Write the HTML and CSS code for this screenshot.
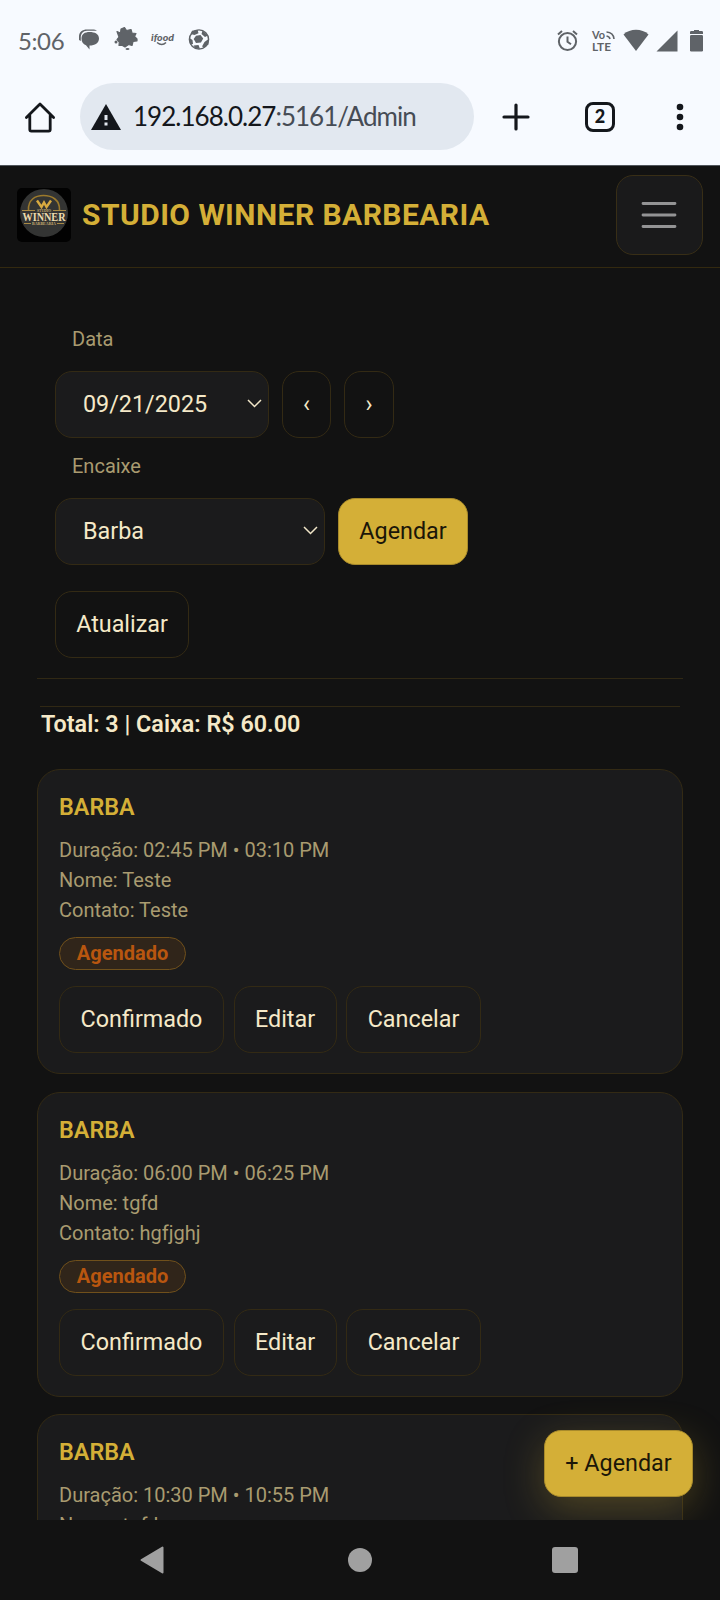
FILE: index.html
```html
<!DOCTYPE html>
<html lang="pt-BR">
<head>
<meta charset="utf-8">
<title>Studio Winner Barbearia</title>
<link rel="stylesheet" href="styles.css">
</head>
<body>
<div class="screen">
  <header class="chrome">
    <div class="status">
      <span class="clock">5:06</span>
      <svg class="status-left" width="136" height="26" viewBox="0 0 136 26" fill="#5f6368">
        <path d="M0 13V9.500C0 5 3.500 2.500 8 2.500h5c2.500 0 4 .4 5 1.200H8C4 3.700 1.800 7 1.800 10.500V14z"/>
        <path d="M10.500 5c5.300 0 9.500 2 9.500 6.500S16 18.500 10.500 18.500V22.500L7 18.200C4.200 17.300 2.500 15 2.500 11.500 2.500 7 6 5 10.500 5z"/>
        <path d="M38 4.500l3.500 1.500.5-4 3.500-1.500 2 3 4.500-1 1 3.500 4 .5-1.500 3 2.500 2.500v1.800l-4 .7-1 4-3.500-1-3.500 2.500-3-1.800-3 .3.300-3.500-2.300-2.500 2-2.500z" stroke="#5f6368" stroke-width="1.200" stroke-linejoin="round"/>
        <circle cx="37" cy="15" r="1.500"/><ellipse cx="48.500" cy="22" rx="2" ry="1.100"/>
        <text x="72" y="14" class="ifood" textLength="23" lengthAdjust="spacingAndGlyphs">ifood</text>
        <path d="M78 15.500q5 4 9 0" fill="none" stroke="#5f6368" stroke-width="1.500"/>
        <circle cx="120" cy="12.500" r="9.600" fill="none" stroke="#5f6368" stroke-width="1.400"/>
        <path d="M117 8.800l4.500-.8 2.700 3.600-2.200 4-5 .3-2.300-4z"/>
        <path d="M113 3.800l5.500-1 1 3.500-4 1.700-4-1zM123.500 3.500l5.500 5-3 1.500-3.500-3zM110.500 11l3 2 .5 4-3 .5zM129.500 12v5.500l-4 3-2.500-1 2.500-4.500zM114.500 18.500l5-.5 1.500 4-4.500-.5z"/>
      </svg>
      <svg class="status-right" width="148" height="26" viewBox="0 0 148 26" fill="#5f6368">
        <g fill="none" stroke="#5f6368" stroke-width="2"><circle cx="10.500" cy="13.500" r="8.600"/><path d="M10.500 8.500v5.300l3.500 2.500M1 6.500l4-3.500M20 6.500L16 3"/></g>
        <text x="35" y="11" class="lte" textLength="13" lengthAdjust="spacingAndGlyphs">Vo</text>
        <text x="35" y="23" class="lte" textLength="19" lengthAdjust="spacingAndGlyphs">LTE</text>
        <path d="M49.500 4q7 .5 7.500 7M49.500 8q3 .5 3.500 3" fill="none" stroke="#5f6368" stroke-width="1.600"/>
        <path d="M66.500 6.500C73 .3 85 .3 91.500 6.500L79 23z"/>
        <path d="M120.500 2.500V23.500H99.500z"/>
        <path d="M133 4.300q0-1.300 1.300-1.300h2.700V2h5v1h2.700q1.300 0 1.300 1.300V6H133z"/>
        <rect x="133" y="7" width="13" height="16.500" rx="1.200"/>
      </svg>
    </div>
    <div class="toolbar">
      <svg class="home" width="32" height="32" viewBox="0 0 32 32" fill="none" stroke="#14171c" stroke-width="2.800" stroke-linejoin="round" stroke-linecap="round"><path d="M2.400 16.500L16 3l13.600 13.500M5.800 14.500V28.500a1.600 1.600 0 0 0 1.600 1.600h17.200a1.600 1.600 0 0 0 1.600-1.600V14.500"/></svg>
      <div class="omnibox">
        <svg width="30" height="26" viewBox="0 0 30 26"><path d="M15 0l15 26H0z" fill="#14171c"/><path d="M13.500 11h3v5h-3zM13.500 18.500h3v3h-3z" fill="#e2e8f0"/></svg>
        <span class="url"><span class="host">192.168.0.27</span><span class="path">:5161/Admin</span></span>
      </div>
      <svg class="plus" width="28" height="28" viewBox="0 0 28 28" stroke="#14171c" stroke-width="3.200" stroke-linecap="round"><path d="M14 2v24M2 14h24"/></svg>
      <div class="tabs">2</div>
      <svg class="dots" width="8" height="28" viewBox="0 0 8 28" fill="#14171c"><circle cx="4" cy="4" r="3.300"/><circle cx="4" cy="14" r="3.300"/><circle cx="4" cy="24" r="3.300"/></svg>
    </div>
  </header>

  <nav class="navbar">
    <svg class="logo" width="54" height="54" viewBox="0 0 54 54">
      <rect width="54" height="54" rx="5" fill="#020202"/>
      <circle cx="27" cy="25" r="24" fill="#333433"/>
      <path d="M11.500 22C11 12 18 7.500 26.500 7.500S43 12 42.500 22" fill="none" stroke="#9c7a2c" stroke-width="1.600"/>
      <path d="M20 12.500l4.500 6.500 2.500-4.500 2.500 4.500 4.500-6.500" fill="none" stroke="#d8aa40" stroke-width="2.400"/>
      <path d="M5 22.500h13M36 22.500h13M7 35.500h7M40 35.500h7" stroke="#a98a45" stroke-width="1"/>
      <text x="27" y="23.500" class="logo-small" textLength="14" lengthAdjust="spacingAndGlyphs">STUDIO</text>
      <text x="27" y="32.500" class="logo-big" textLength="43" lengthAdjust="spacingAndGlyphs">WINNER</text>
      <text x="27" y="37" class="logo-small" textLength="24" lengthAdjust="spacingAndGlyphs">BARBEARIA</text>
    </svg>
    <span class="brand">STUDIO WINNER BARBEARIA</span>
    <button class="toggler"><svg width="36" height="28" viewBox="0 0 36 28" stroke="#949495" stroke-width="2.800" stroke-linecap="round"><path d="M2 2.500h32M2 14h32M2 25.500h32"/></svg></button>
  </nav>

  <main class="page">
    <section class="filters">
      <div class="label">Data</div>
      <div class="row">
        <div class="field date"><span>09/21/2025</span><svg width="15" height="9" viewBox="0 0 15 9"><path d="M1 1l6.500 6.500L14 1" fill="none" stroke="#f1e6c8" stroke-width="1.500"/></svg></div>
        <button class="btn arrow">‹</button>
        <button class="btn arrow">›</button>
      </div>
      <div class="label">Encaixe</div>
      <div class="row">
        <div class="field service"><span>Barba</span><svg width="15" height="9" viewBox="0 0 15 9"><path d="M1 1l6.500 6.500L14 1" fill="none" stroke="#f1e6c8" stroke-width="1.500"/></svg></div>
        <button class="btn gold schedule">Agendar</button>
      </div>
      <div class="row refresh"><button class="btn update">Atualizar</button></div>
    </section>
    <div class="summary">Total: 3 | Caixa: R$ 60.00</div>
    <section class="cards">
      <article class="card">
        <h2>BARBA</h2>
        <p>Duração: 02:45 PM • 03:10 PM</p><p>Nome: Teste</p><p>Contato: Teste</p>
        <span class="badge">Agendado</span>
        <div class="actions"><button class="btn confirm">Confirmado</button><button class="btn edit">Editar</button><button class="btn cancel">Cancelar</button></div>
      </article>
      <article class="card">
        <h2>BARBA</h2>
        <p>Duração: 06:00 PM • 06:25 PM</p><p>Nome: tgfd</p><p>Contato: hgfjghj</p>
        <span class="badge">Agendado</span>
        <div class="actions"><button class="btn confirm">Confirmado</button><button class="btn edit">Editar</button><button class="btn cancel">Cancelar</button></div>
      </article>
      <article class="card">
        <h2>BARBA</h2>
        <p>Duração: 10:30 PM • 10:55 PM</p><p>Nome: tgfd</p>
      </article>
    </section>
    <button class="btn gold fab">+ Agendar</button>
  </main>

  <footer class="sysnav">
    <svg width="24" height="28" viewBox="0 0 24 28"><path d="M22.500 1.500v25L1.500 14z" fill="#a0a0a0" stroke="#a0a0a0" stroke-width="2" stroke-linejoin="round"/></svg>
    <span class="sys-home"></span>
    <span class="sys-recent"></span>
  </footer>
</div>
</body>
</html>
```
FILE: styles.css
```css
* { box-sizing: border-box; }
body { margin: 0; background: #121212; font-family: Roboto, sans-serif; }
svg { display: block; flex: none; overflow: visible; }
button { font: inherit; padding: 0; margin: 0; }
.screen { width: 720px; height: 1600px; overflow: hidden; display: flex; flex-direction: column; background: #121212; }

.chrome { height: 166px; flex: none; background: #f7faff; border-bottom: 1px solid #50555b; }
.status { height: 82px; display: flex; align-items: center; padding: 0 16px 0 18px; color: #5f6368; }
.clock { width: 61px; margin-top: -2px; font: 24px Lato, sans-serif; letter-spacing: -0.4px; }
.status-left { margin-top: -2px; }
.status-right { margin-left: auto; margin-right: -1px; margin-top: -1px; }
.ifood { font: italic 900 10px Lato, sans-serif; }
.lte { font: bold 11px Lato, sans-serif; }
.toolbar { height: 69px; display: flex; align-items: center; padding-left: 24px; }
.omnibox { width: 394px; height: 67px; margin-left: 24px; padding-left: 11px; border-radius: 34px; background: #e2e8f0; display: flex; align-items: center; }
.url { margin-left: 12px; margin-top: -1px; font: 26px Lato, sans-serif; letter-spacing: -0.98px; white-space: nowrap; }
.host { color: #14171c; }
.path { color: #464c55; }
.plus { margin-left: 28px; }
.tabs { width: 30px; height: 30px; margin-left: 55px; border: 3px solid #14171c; border-radius: 8px; font: 900 18px/23px Lato, sans-serif; text-align: center; color: #14171c; }
.dots { margin-left: 61px; }

.navbar { height: 102px; flex: none; display: flex; align-items: center; padding: 0 17px 4px; border-bottom: 1px solid #33290f; }
.logo-small { font: bold 4px "Liberation Serif", serif; fill: #c8ad72; text-anchor: middle; }
.logo-big { font: bold 12px "Liberation Serif", serif; fill: #eddcae; text-anchor: middle; }
.brand { margin-left: 11px; font-size: 30px; font-weight: 700; letter-spacing: 0.45px; color: #d4af37; white-space: nowrap; }
.toggler { width: 87px; height: 80px; margin-left: auto; border: 1px solid #382e16; border-radius: 17px; background: #1a1a1b; display: flex; align-items: center; justify-content: center; }
.toggler svg { margin-right: 2px; }

.page { position: relative; flex: 1; min-height: 0; overflow: hidden; padding: 54px 37px 0; color: #f5e9c8; }
.filters { height: 357px; padding: 0 18px; border-bottom: 1px solid #302814; }
.label { height: 49px; padding: 2px 0 0 17px; font-size: 20px; line-height: 30px; color: #a99b70; }
.row + .label { height: 60px; padding-top: 13px; }
.row { display: flex; gap: 13px; height: 67px; }
.refresh { margin-top: 26px; }
.field { height: 67px; padding: 0 6px 2px 27px; border: 1px solid #332a14; border-radius: 17px; background: #1b1b1c; display: flex; align-items: center; justify-content: space-between; font-size: 23.33px; }
.date { width: 214px; }
.service { width: 270px; }
.btn { height: 67px; flex: none; border: 1px solid #332a14; border-radius: 17px; background: transparent; color: #f5e9c8; font-size: 23.33px; line-height: 35px; text-align: center; }
.arrow { width: 49px; }
.arrow + .arrow { width: 50px; }
.gold { background: #d4af37; border-color: #a88a2b; color: #1b1608; }
.schedule { width: 130px; }
.update { width: 134px; }
.summary { margin: 27px 3px 0; border-top: 1px solid #302814; font-size: 23.33px; font-weight: 600; line-height: 35px; padding-left: 1px; }
.cards { margin-top: 27px; display: flex; flex-direction: column; gap: 17.500px; }
.card { height: 305px; flex: none; padding: 20px 20px 20px 21px; border: 1px solid #332a14; border-radius: 23px; background: #1b1b1c; width: 646px; }
.card h2 { margin: 0 0 10px; font-size: 23.33px; font-weight: 600; line-height: 35px; color: #d4af37; }
.card p { margin: 0; font-size: 20px; line-height: 30px; color: #a99b70; }
.badge { display: block; width: 127px; height: 33px; margin-top: 12px; border: 1px solid #70501b; border-radius: 17px; background: #30251a; color: #b8560f; font-size: 20px; font-weight: 700; line-height: 31px; text-align: center; }
.actions { display: flex; gap: 10px; margin-top: 16px; }
.confirm { width: 165px; }
.edit { width: 103px; }
.cancel { width: 135px; }
.card .edit, .card .cancel { margin-left: -0.5px; }
.fab { position: absolute; right: 27px; bottom: 23px; width: 149px; box-shadow: 0 12px 40px rgba(212, 175, 55, 0.28); }

.sysnav { position: relative; height: 80px; flex: none; display: flex; align-items: center; padding-left: 140px; background: #121212; }
.sys-home { width: 24px; height: 24px; margin-left: 184px; border-radius: 50%; background: #a0a0a0; }
.sys-recent { width: 26px; height: 26px; margin-left: 180px; border-radius: 3px; background: #a0a0a0; }
```
